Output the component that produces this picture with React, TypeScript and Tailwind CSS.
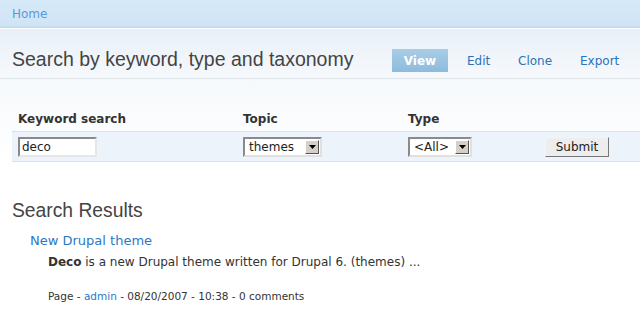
import React from 'react'

const verdana = "font-['DejaVu_Sans',Verdana,sans-serif]"
const helv = "font-['Liberation_Sans',Arial,sans-serif]"

function Select({ value, width }: { value: string; width: string }) {
  return (
    <div className={`flex h-[20px] ${width} items-center border-2 border-t-[#8a8a8a] border-l-[#8a8a8a] border-r-[#e0e0e0] border-b-[#e0e0e0] bg-white`}>
      <span className="flex-1 pl-[4px] text-[12px] text-[#222]">{value}</span>
      <span className="mr-[1px] flex h-[14px] w-[14px] items-center justify-center border border-t-white border-l-white border-r-[#555] border-b-[#555] bg-[#d4d0c8]">
        <svg width="7" height="4" viewBox="0 0 7 4">
          <path d="M0 0h7L3.5 4z" fill="#000" />
        </svg>
      </span>
    </div>
  )
}

export default function App() {
  const tabs = [
    { label: 'Edit', w: 'w-[51px]' },
    { label: 'Clone', w: 'w-[62px]' },
    { label: 'Export', w: 'w-[60px]' }
  ]

  return (
    <div className={`h-[322px] w-[640px] overflow-hidden bg-white ${verdana}`}>
      {/* breadcrumb bar */}
      <div className="flex h-[28px] items-center bg-gradient-to-b from-[#d6e9f8] to-[#cfe4f5] px-[12px] shadow-[inset_0_-2px_2px_-1px_#b9d3ea]">
        <a className="text-[12px] text-[#5a9ad8]">Home</a>
      </div>

      {/* title area */}
      <div className="mt-[1px] flex h-[50px] items-end justify-between border-b border-[#dfe4e9] bg-gradient-to-b from-[#e9f0f8] to-[#f6f9fc] pb-[6px] pl-[12px]">
        <h1 className={`${helv} mb-[1px] text-[19.5px] leading-[24px] text-[#444]`}>Search by keyword, type and taxonomy</h1>
        <div className="flex items-center">
          <span className="flex h-[23px] w-[56px] items-center justify-center bg-gradient-to-b from-[#a8cde7] to-[#8ebbdc] text-[12px] font-bold text-white">
            View
          </span>
          <div className="ml-[19px] flex">
            {tabs.map((t) => (
              <a key={t.label} className={`${t.w} text-[12px] text-[#2b72b9]`}>
                {t.label}
              </a>
            ))}
          </div>
        </div>
      </div>

      {/* exposed filters */}
      <div className="bg-gradient-to-b from-[#f6f9fc] to-white pl-[12px] pt-[28px]">
        <div className="flex h-[24px] items-center text-[12px] font-bold text-[#333]">
          <span className="w-[231px] pl-[6px]">Keyword search</span>
          <span className="w-[165px]">Topic</span>
          <span>Type</span>
        </div>
        <div className="flex h-[31px] items-center border-y border-[#d2e4f3] bg-[#edf3fa]">
          <div className="w-[231px] pl-[6px]">
            <div className="h-[20px] w-[79px] border-2 border-t-[#8a8a8a] border-l-[#8a8a8a] border-r-[#e6e6e6] border-b-[#e6e6e6] bg-white pl-[2px] text-[12px] leading-[16px] text-[#222]">
              deco
            </div>
          </div>
          <div className="w-[165px]">
            <Select value="themes" width="w-[79px]" />
          </div>
          <div className="w-[137px]">
            <Select value="<All>" width="w-[64px]" />
          </div>
          <button className="h-[20px] w-[64px] border border-t-[#f4f4f4] border-l-[#f4f4f4] border-r-[#777] border-b-[#777] bg-[#ededed] text-[12px] text-[#222]">
            Submit
          </button>
        </div>
      </div>

      {/* results */}
      <div className="px-[12px] pt-[38px]">
        <h2 className={`${helv} text-[19.3px] leading-[22px] text-[#444]`}>Search Results</h2>
        <div className="pl-[18px] pt-[9px]">
          <a className="block text-[13px] leading-[20px] text-[#2a78c9]">New Drupal theme</a>
          <div className="pl-[18px] pt-[2px]">
            <p className="text-[12px] leading-[18px] text-[#333]">
              <strong>Deco</strong> is a new Drupal theme written for Drupal 6. (themes) ...
            </p>
            <p className="pt-[18px] text-[10.5px] leading-[15px] text-[#333]">
              Page - <a className="text-[#2a78c9]">admin</a> - 08/20/2007 - 10:38 - 0 comments
            </p>
          </div>
        </div>
      </div>
    </div>
  )
}
